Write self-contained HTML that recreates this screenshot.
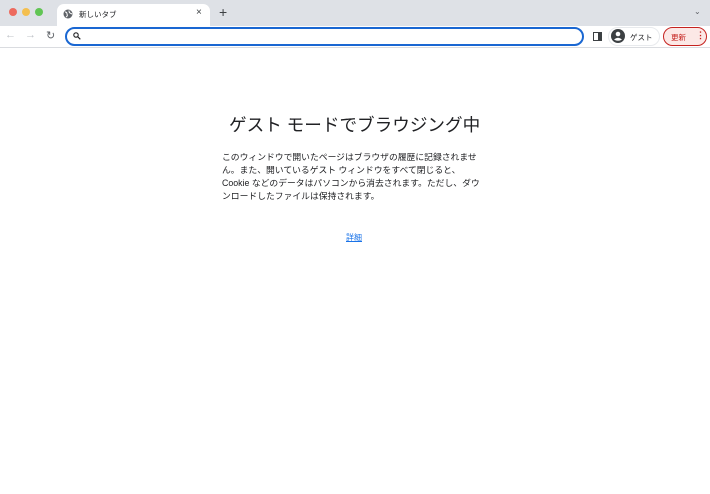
<!DOCTYPE html>
<html><head><meta charset="utf-8"><style>
*{margin:0;padding:0;box-sizing:border-box}
body{width:710px;height:494px;background:#fff;font-family:"Liberation Sans","Noto Sans CJK JP",sans-serif;position:relative;overflow:hidden;color:#202124}
.tb{position:absolute;left:0;top:0;width:710px;height:26px;background:#dee1e6}
.dot{position:absolute;top:8px;width:8px;height:8px;border-radius:50%}
.tab{position:absolute;left:57px;top:4px;width:153px;height:22px;background:#fff;border-radius:7px 7px 0 0}
.bar{position:absolute;left:0;top:26px;width:710px;height:22px;background:#fff;border-bottom:1px solid #dadce0}
.omni{position:absolute;left:65px;top:27px;width:519px;height:19px;border:2px solid #1a67d2;border-radius:10px}
.t{position:absolute;font-size:8px;white-space:nowrap}
</style></head><body>
<div class="tb"></div>
<div class="dot" style="left:9px;background:#ed6a5e"></div>
<div class="dot" style="left:22px;background:#f4bf4f"></div>
<div class="dot" style="left:35px;background:#61c554"></div>
<div class="tab"></div>
<svg style="position:absolute;left:63px;top:9px" width="10" height="10" viewBox="0 0 10 10"><circle cx="5" cy="5" r="4.5" fill="#5f6368"/><path d="M2 3 Q4 3 4 5 Q5 7 3 8 M6 1.5 Q6 4 8 4.5 L9 5" stroke="#fff" stroke-width="1" fill="none"/></svg>
<div class="t" style="left:79px;top:9px;font-size:7.5px">新しいタブ</div>
<div class="t" style="left:196px;top:7px;font-size:10px;color:#3c4043">×</div>
<div class="t" style="left:219px;top:4px;font-size:14px;color:#3c4043">+</div>
<div class="t" style="left:694px;top:7px;font-size:8px;color:#5f6368">⌄</div>
<div class="bar"></div>
<div class="t" style="left:5px;top:29px;font-size:11px;color:#bdc1c6">←</div>
<div class="t" style="left:25px;top:29px;font-size:11px;color:#bdc1c6">→</div>
<div class="t" style="left:46px;top:29px;font-size:11px;color:#5f6368">↻</div>
<div class="omni"></div>
<svg style="position:absolute;left:73px;top:32px" width="8" height="8" viewBox="0 0 8 8"><circle cx="3" cy="3" r="2.2" stroke="#202124" stroke-width="1.1" fill="none"/><path d="M4.6 4.6 L7.3 7.3" stroke="#202124" stroke-width="1.2"/></svg>
<div style="position:absolute;left:593px;top:32px;width:9px;height:9px;border:1.5px solid #3c4043;border-right-width:4px"></div>
<div style="position:absolute;left:608px;top:27px;width:52px;height:19px;border-radius:10px;border:1px solid #e8eaed"></div>
<svg style="position:absolute;left:611px;top:29px" width="14" height="14" viewBox="0 0 14 14"><circle cx="7" cy="7" r="7" fill="#3c4043"/><circle cx="7" cy="5" r="2.3" fill="#fff"/><path d="M3 10.5 Q7 7 11 10.5 Q7 13 3 10.5Z" fill="#fff"/></svg>
<div class="t" style="left:630px;top:32px;font-size:7.5px">ゲスト</div>
<div style="position:absolute;left:663px;top:27px;width:44px;height:19px;border-radius:10px;border:1px solid #c5221f;background:#fce8e6"></div>
<div class="t" style="left:671px;top:32px;font-size:7.5px;color:#c5221f">更新</div>
<div class="t" style="left:696px;top:30px;font-size:9px;color:#c5221f;font-weight:bold">⋮</div>
<div class="t" style="left:229px;top:112px;font-size:17.6px">ゲスト モードでブラウジング中</div>
<div class="t" style="left:222px;top:151px;font-size:8.8px;line-height:13px">このウィンドウで開いたページはブラウザの履歴に記録されませ<br>ん。また、開いているゲスト ウィンドウをすべて閉じると、<br>Cookie などのデータはパソコンから消去されます。ただし、ダウ<br>ンロードしたファイルは保持されます。</div>
<div class="t" style="left:346px;top:232px;font-size:8px;color:#1a73e8;text-decoration:underline">詳細</div>
</body></html>
